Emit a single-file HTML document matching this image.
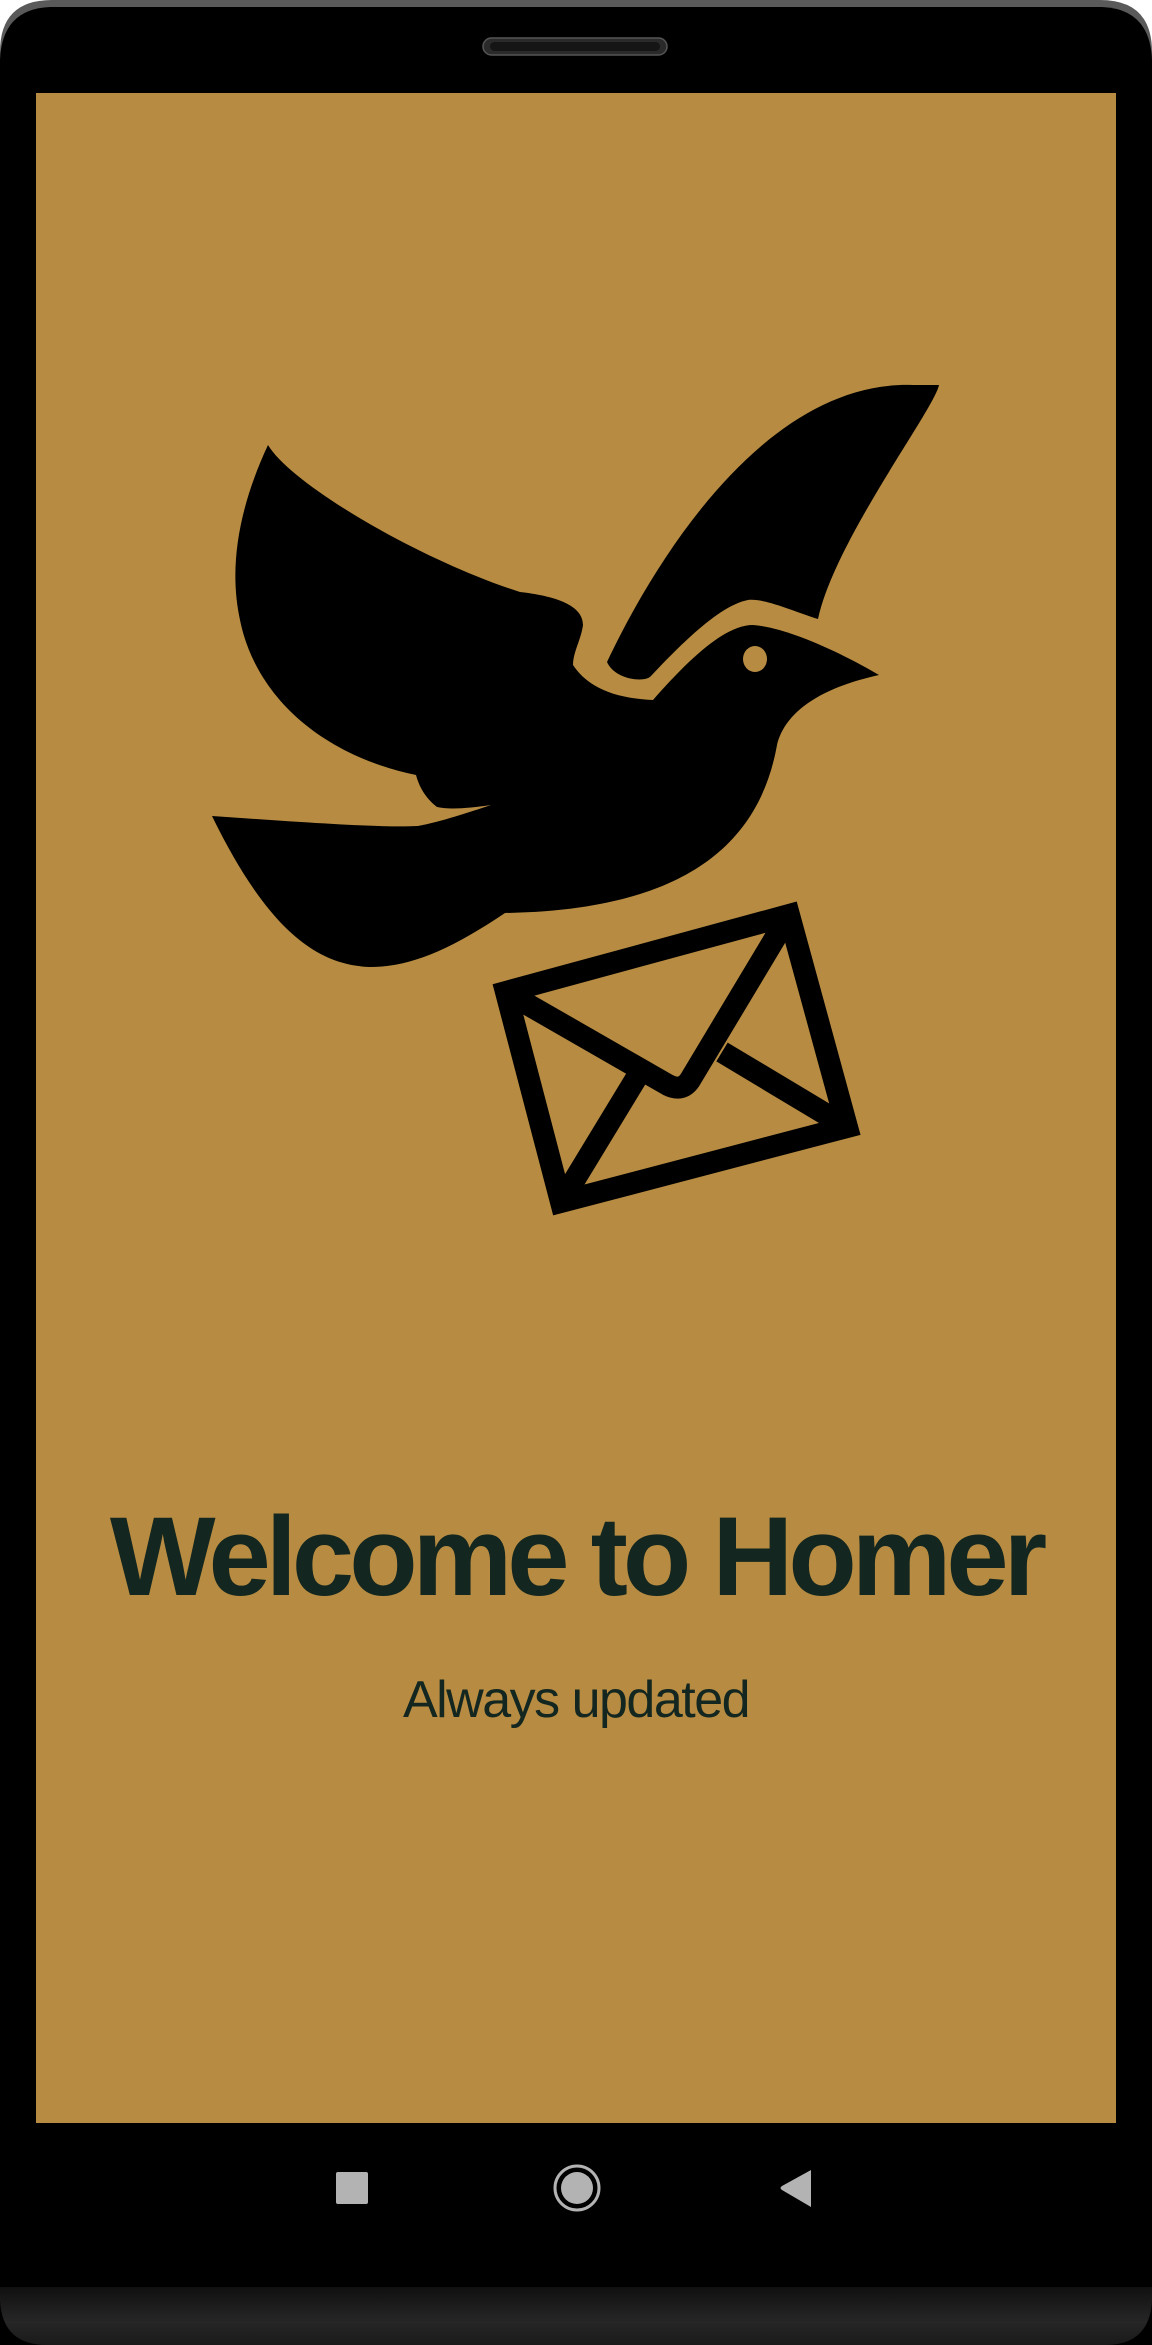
<!DOCTYPE html>
<html><head><meta charset="utf-8"><style>
html,body{margin:0;padding:0;background:#fff;}
svg{display:block}
</style></head><body>
<svg width="1152" height="2345" viewBox="0 0 1152 2345" xmlns="http://www.w3.org/2000/svg">
<defs>
<linearGradient id="top" x1="0" y1="0" x2="0" y2="1"><stop offset="0" stop-color="#5a5a5a"/><stop offset="1" stop-color="#2a2a2a"/></linearGradient>
<linearGradient id="bot" x1="0" y1="0" x2="0" y2="1"><stop offset="0" stop-color="#101010"/><stop offset="0.6" stop-color="#262626"/><stop offset="1" stop-color="#1a1a1a"/></linearGradient>
<clipPath id="env"><polygon points="506,992 789,915 847,1127 561,1202"/></clipPath>
</defs>
<path d="M52 0 H1100 Q1152 0 1152 52 V2345 H0 V52 Q0 0 52 0Z" fill="url(#top)"/>
<path d="M50 7 H1102 Q1150 9 1152 60 V2345 H0 V60 Q2 9 50 7Z" fill="#000"/>
<path d="M0 2287 H1152 V2300 Q1150 2345 1105 2345 H47 Q2 2345 0 2300Z" fill="url(#bot)"/>
<rect x="483" y="38" width="184" height="17" rx="8.5" fill="#2a2a2a" stroke="#555" stroke-width="1.5"/>
<rect x="490" y="42" width="170" height="9" rx="4.5" fill="#151515"/>
<rect x="36" y="93" width="1080" height="2030" fill="#b78c42"/>
<!-- dove -->
<path fill="#000" d="M268 445 C292 485 420 560 520 592 C555 596 583 605 583 625 C581 640 573 652 573 665 C585 683 607 698 653 700 C690 658 725 625 753 625 C790 628 845 655 879 675 C820 688 785 712 777 745 C760 840 690 910 505 913 C450 950 410 967 370 967 C320 965 270 935 212 816 C300 822 380 828 418 826 C440 822 470 812 491 805 C470 808 450 810 437 807 C428 800 420 790 416 775 C320 755 255 695 240 620 C228 565 240 505 268 445Z"/>
<path fill="#000" d="M939 385 C934 410 835 540 818 619 C795 612 765 598 748 600 C720 605 680 645 651 676 C645 683 615 680 607 662 C660 550 770 380 913 385Z"/>
<ellipse cx="755" cy="659" rx="12" ry="13" fill="#b78c42"/>
<!-- envelope -->
<g fill="none" stroke="#000" stroke-width="22">
<polygon points="506,992 789,915 847,1127 561,1202" stroke-linejoin="miter"/>
<g clip-path="url(#env)">
<path d="M506 992 L668 1085 Q682 1092 690 1080 L789 915" stroke-linejoin="round"/>
<path d="M561 1202 L640 1072 M847 1127 L722 1052"/>
</g>
</g>
<text x="576" y="1595" text-anchor="middle" font-family="'Liberation Sans',sans-serif" font-weight="bold" font-size="112" letter-spacing="-5" fill="#13261f">Welcome to Homer</text>
<text x="576" y="1717" text-anchor="middle" font-family="'Liberation Sans',sans-serif" font-size="52" letter-spacing="-1.5" fill="#13261f">Always updated</text>
<!-- nav -->
<rect x="336" y="2172" width="32" height="32" rx="2" fill="#b3b3b3"/>
<circle cx="577" cy="2188" r="22" fill="none" stroke="#b3b3b3" stroke-width="3"/>
<circle cx="577" cy="2188" r="16" fill="#b3b3b3"/>
<path d="M811 2170 V2207 L782 2190 Q779 2188 782 2186Z" fill="#b3b3b3"/>
</svg>
</body></html>
